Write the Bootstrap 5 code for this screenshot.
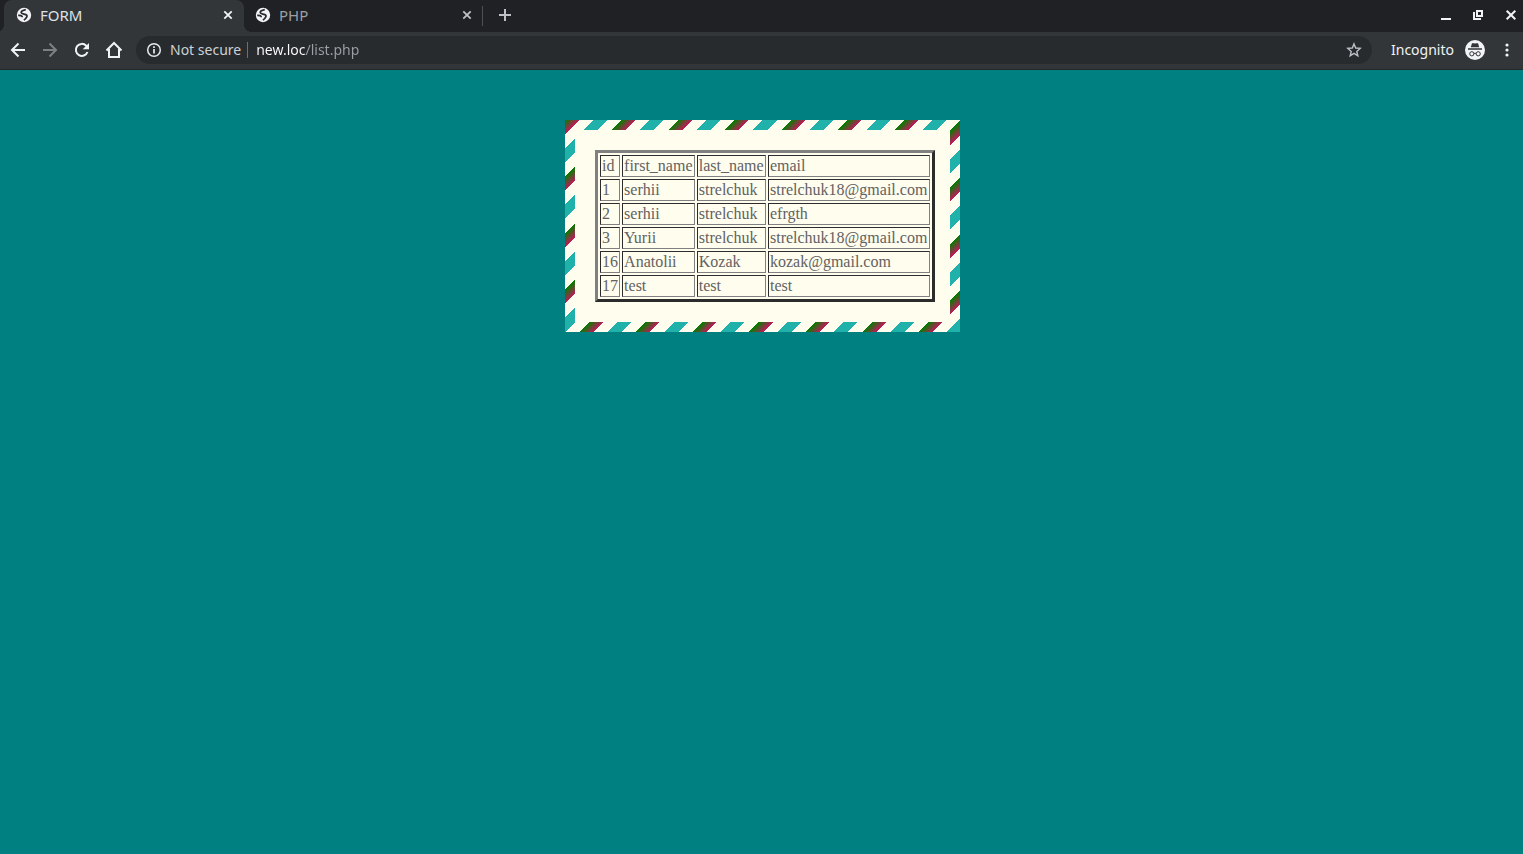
<!DOCTYPE html>
<html lang="en">
<head>
<meta charset="utf-8">
<meta name="viewport" content="width=device-width, initial-scale=1">
<title>FORM</title>
<link href="https://cdn.jsdelivr.net/npm/bootstrap@5.3.0/dist/css/bootstrap.min.css" rel="stylesheet">
<style>
body { background: #008080; font-family: "Noto Sans", "Open Sans", sans-serif; font-size: 14px; line-height: 20px; }
.tab-strip { height: 32px; background: #202124; padding-left: 4px; }
.browser-tab { width: 240px; height: 32px; padding: 0 10px 2px 12px; color: #9aa0a6; font-size: 15px; position: relative; }
.browser-tab a { color: inherit; }
.browser-tab.current { background: #323639; color: #dfe1e5; border-radius: 8px 8px 0 0; }
.browser-tab.current::before, .browser-tab.current::after { content: ""; position: absolute; bottom: 0; width: 8px; height: 8px; }
.browser-tab.current::before { right: 100%; background: radial-gradient(circle at 0 0, transparent 8px, #323639 8px); }
.browser-tab.current::after { left: 100%; background: radial-gradient(circle at 100% 0, transparent 8px, #323639 8px); }
.browser-tab.other { width: 239px; padding-left: 11px; padding-right: 9px; border-right: 1px solid #4d5054; height: 20px; }
.icon-btn { display: flex; align-items: center; justify-content: center; padding: 0; border: 0; background: none; color: #f1f3f4; width: 32px; height: 30px; flex: none; }
.icon-btn.tight { width: 12px; }
.icon-btn.dim { color: #bdc1c6; }
.icon-btn:disabled { color: #7d8083; }
.new-tab { margin-left: 6px; }
.window-controls { gap: 20px; padding-right: 6px; }
.toolbar { height: 38px; background: #323639; border-bottom: 1px solid #26292c; padding: 0 0 2px 2px; }
.omnibox { height: 28px; background: #282b2e; margin-left: 6px; padding: 0 2px 0 10px; border-radius: 14px; color: #cdd0d4; }
.site-status { padding-right: 6px; border-right: 1px solid #6d7073; line-height: 16px; }
.address { border: 0; padding: 0; outline: 0; height: 20px; min-width: 0; background: linear-gradient(90deg, #fff 50px, #9aa0a6 50px); -webkit-background-clip: text; background-clip: text; color: transparent; }
.profile { color: #f1f3f4; margin: 0 6px 0 19px; gap: 8px; }
.profile span { min-width: 66px; }
.profile svg { flex: none; }
main { padding-left: 2px; }
.letter { margin-top: 50px; padding: 20px 15px 20px 20px; background: #fffdee; border: 10px solid transparent;
  border-image: repeating-linear-gradient(135deg, green 0, #c2185b 10px, #fffdee 10px, #fffdee 20px, lightseagreen 20px, lightseagreen 30px, #fffdee 30px, #fffdee 40px) 10; }
.people { width: 340px; border-collapse: separate; border-spacing: 2px; border: 3px solid; border-color: #808080 #2c2c2c #2c2c2c #808080; color: #626262; font: 16px/18px "Liberation Serif", serif; }
.people td, .people th { border: 1px solid; border-color: #2c2c2c #808080 #808080 #2c2c2c; padding: 1px; font-weight: 400; text-align: left; }
</style>
</head>
<body>
<svg class="d-none" xmlns="http://www.w3.org/2000/svg">
  <symbol id="globe" viewBox="0 0 16 16">
    <circle cx="8" cy="8" r="7.200" fill="#f1f3f4"/>
    <path d="M9.800 2.600C7.500 3 4.900 3.700 5.200 5.700C5.500 7.500 9.600 6.700 10.800 8.300C11.900 10 9.500 11.500 8 13.300M2.200 8.300C4 8.200 6.300 8.500 6.300 10.300" fill="none" stroke="#292b2e" stroke-width="1.700"/>
  </symbol>
  <symbol id="cross" viewBox="0 0 12 12"><path d="M2.300 2.300L9.700 9.700M9.700 2.300L2.300 9.700" stroke="currentColor" stroke-width="1.800"/></symbol>
</svg>
<header>
  <nav class="tab-strip d-flex align-items-center" aria-label="Tabs">
    <div class="browser-tab current d-flex align-items-center gap-2">
      <svg width="16" height="16"><use href="#globe"/></svg>
      <a class="flex-grow-1 text-decoration-none" href="#">FORM</a>
      <button class="icon-btn tight" aria-label="Close FORM"><svg width="12" height="12"><use href="#cross"/></svg></button>
    </div>
    <div class="browser-tab other d-flex align-items-center gap-2">
      <svg width="16" height="16"><use href="#globe"/></svg>
      <a class="flex-grow-1 text-decoration-none" href="#">PHP</a>
      <button class="icon-btn tight dim" aria-label="Close PHP"><svg width="12" height="12"><use href="#cross"/></svg></button>
    </div>
    <button class="icon-btn dim new-tab align-self-start" aria-label="New tab"><svg width="14" height="14"><path d="M7 1v12M1 7h12" stroke="currentColor" stroke-width="2"/></svg></button>
    <div class="window-controls d-flex ms-auto align-self-start">
      <button class="icon-btn tight" aria-label="Minimize"><svg width="12" height="12"><path d="M0 10h10" stroke="currentColor" stroke-width="2"/></svg></button>
      <button class="icon-btn tight" aria-label="Restore"><svg width="12" height="12" fill="none" stroke="currentColor" stroke-width="2"><path d="M4 2h5v5H4zM1 3v7h7"/></svg></button>
      <button class="icon-btn tight" aria-label="Close window"><svg width="12" height="12"><path d="M1.700 1.700L10.300 10.300M10.300 1.700L1.700 10.300" stroke="currentColor" stroke-width="2"/></svg></button>
    </div>
  </nav>
  <div class="toolbar d-flex align-items-center">
    <button class="icon-btn" aria-label="Back"><svg width="16" height="16" fill="none" stroke="currentColor" stroke-width="2"><path d="M15 8H2.500M8.500 1.500L2 8l6.500 6.500"/></svg></button>
    <button class="icon-btn" aria-label="Forward" disabled><svg width="16" height="16" fill="none" stroke="currentColor" stroke-width="2"><path d="M1 8h12.500M7.500 1.500L14 8l-6.500 6.500"/></svg></button>
    <button class="icon-btn" aria-label="Reload"><svg width="16" height="16"><path d="M13.500 10A6 6 0 1 1 12.200 3.700L14 5.500" fill="none" stroke="currentColor" stroke-width="2"/><path d="M15 1v6.300H8.700z" fill="currentColor"/></svg></button>
    <button class="icon-btn" aria-label="Home"><svg width="18" height="18"><path d="M1.500 9.500L9 2l7.500 7.500M4 8v8h10V8" fill="none" stroke="currentColor" stroke-width="2"/></svg></button>
    <div class="omnibox d-flex align-items-center flex-grow-1 gap-2">
      <svg width="16" height="16" fill="none" stroke="#e8eaed"><circle cx="8" cy="8" r="6.300" stroke-width="1.500"/><path d="M8 7v4.500M8 4.300v1.700" stroke-width="1.700"/></svg>
      <label class="site-status" for="address">Not secure</label>
      <input class="address flex-grow-1" id="address" type="text" value="new.loc/list.php">
      <button class="icon-btn dim" aria-label="Bookmark"><svg width="16" height="16"><path d="M8 1.900L9.700 6l4.500.4-3.400 3 1 4.400L8 11.400l-3.800 2.400 1-4.400-3.400-3L6.300 6z" fill="none" stroke="currentColor" stroke-width="1.400"/></svg></button>
    </div>
    <div class="profile d-flex align-items-center">
      <span>Incognito</span>
      <svg width="20" height="20"><circle cx="10" cy="10" r="10" fill="#f1f3f4"/><path d="M5.800 7.200L7 3.200H8.800l1.200.4 1.200-.4H13l1.200 4zM3 8.300h14v1.400H3z" fill="#323639"/><g fill="none" stroke="#323639"><circle cx="6.800" cy="13.800" r="2.100"/><circle cx="13.200" cy="13.800" r="2.100"/><path d="M9 13.500q1-.7 2 0"/></g></svg>
    </div>
    <button class="icon-btn" aria-label="Menu"><svg width="4" height="16" fill="currentColor"><circle cx="2" cy="3" r="1.600"/><circle cx="2" cy="8" r="1.600"/><circle cx="2" cy="13" r="1.600"/></svg></button>
  </div>
</header>
<main class="d-flex justify-content-center">
  <section class="letter">
    <table class="people">
      <thead><tr><th>id</th><th>first_name</th><th>last_name</th><th>email</th></tr></thead>
      <tbody>
        <tr><td>1</td><td>serhii</td><td>strelchuk</td><td>strelchuk18@gmail.com</td></tr>
        <tr><td>2</td><td>serhii</td><td>strelchuk</td><td>efrgth</td></tr>
        <tr><td>3</td><td>Yurii</td><td>strelchuk</td><td>strelchuk18@gmail.com</td></tr>
        <tr><td>16</td><td>Anatolii</td><td>Kozak</td><td>kozak@gmail.com</td></tr>
        <tr><td>17</td><td>test</td><td>test</td><td>test</td></tr>
      </tbody>
    </table>
  </section>
</main>
<script src="https://cdn.jsdelivr.net/npm/bootstrap@5.3.0/dist/js/bootstrap.bundle.min.js"></script>
</body>
</html>
